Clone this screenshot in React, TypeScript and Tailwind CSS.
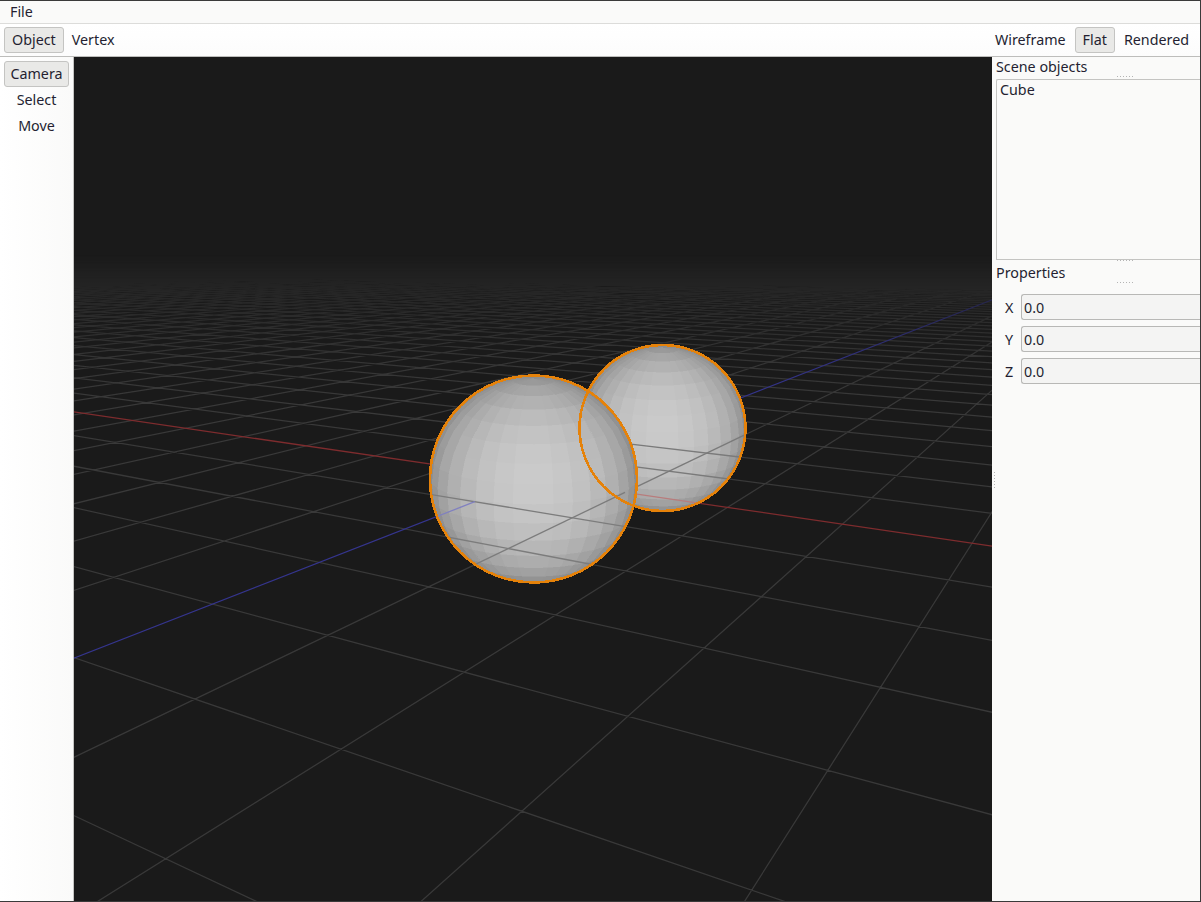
import React from "react";

// ground plane homography, fitted on the axes in the picture
const O = { x: 533, y: 479 };
const VX = { x: -1172, y: 230 };
const VZ = { x: 1171, y: 230 };
const G = -0.0512;
const H = -0.0836;

const ground = (u: number, v: number) => {
  const w = 1 + G * u + H * v;
  return {
    x: (O.x + u * G * VX.x + v * H * VZ.x) / w,
    y: (O.y + u * G * VX.y + v * H * VZ.y) / w,
  };
};

const N = 220;

const uLine = (u: number, vFrom = -N, vTo?: number) => {
  const max = (1 + G * u - 0.04) / -H;
  const a = ground(u, vFrom);
  const b = ground(u, Math.min(vTo ?? N, max));
  return `M${a.x.toFixed(2)} ${a.y.toFixed(2)}L${b.x.toFixed(2)} ${b.y.toFixed(2)}`;
};

const vLine = (v: number, uFrom = -N, uTo?: number) => {
  const max = (1 + H * v - 0.04) / -G;
  const a = ground(uFrom, v);
  const b = ground(Math.min(uTo ?? N, max), v);
  return `M${a.x.toFixed(2)} ${a.y.toFixed(2)}L${b.x.toFixed(2)} ${b.y.toFixed(2)}`;
};

const gridPath = () => {
  let d = "";
  for (let i = -N; i <= N; i++) {
    if (i !== 0) d += uLine(i) + vLine(i);
  }
  return d;
};

const EL = (14 * Math.PI) / 180;
const LONS = 32;
const LATS = 16;

const project = (lat: number, lon: number) => {
  const x = Math.cos(lat) * Math.sin(lon);
  const y = Math.sin(lat);
  const z = Math.cos(lat) * Math.cos(lon);
  return {
    x,
    y: y * Math.cos(EL) - z * Math.sin(EL),
    z: y * Math.sin(EL) + z * Math.cos(EL),
  };
};

const Sphere = ({ cx, cy, r }: { cx: number; cy: number; r: number }) => {
  const quads: { points: string; fill: string }[] = [];
  for (let i = 0; i < LATS; i++) {
    const lat0 = -Math.PI / 2 + (i * Math.PI) / LATS;
    const lat1 = lat0 + Math.PI / LATS;
    for (let j = 0; j < LONS; j++) {
      const lon0 = (j * 2 * Math.PI) / LONS;
      const lon1 = lon0 + (2 * Math.PI) / LONS;
      const mid = project((lat0 + lat1) / 2, (lon0 + lon1) / 2);
      if (mid.z <= -0.05) continue;
      const gray = Math.round(130 + 72 * Math.max(mid.z, 0));
      const points = [
        project(lat0, lon0),
        project(lat0, lon1),
        project(lat1, lon1),
        project(lat1, lon0),
      ]
        .map((p) => `${(cx + p.x * r).toFixed(2)},${(cy - p.y * r).toFixed(2)}`)
        .join(" ");
      quads.push({ points, fill: `rgb(${gray},${gray},${gray})` });
    }
  }
  return (
    <g shapeRendering="crispEdges">
      {quads.map((q, i) => (
        <polygon key={i} points={q.points} fill={q.fill} stroke={q.fill} strokeWidth={0.5} />
      ))}
    </g>
  );
};

const Viewport = () => (
  <svg viewBox="74 57 918 844" className="block h-full w-full">
    <defs>
      <linearGradient id="fade" gradientUnits="userSpaceOnUse" x1="0" y1="255" x2="0" y2="400">
        <stop offset="0" stopColor="#fff" stopOpacity="0" />
        <stop offset="0.25" stopColor="#fff" stopOpacity="0.38" />
        <stop offset="0.7" stopColor="#fff" stopOpacity="0.85" />
        <stop offset="1" stopColor="#fff" stopOpacity="1" />
      </linearGradient>
      <mask id="fadeMask" maskUnits="userSpaceOnUse" x="74" y="57" width="918" height="844">
        <rect x="74" y="57" width="918" height="844" fill="url(#fade)" />
      </mask>
      <clipPath id="s1">
        <circle cx="533.5" cy="479" r="103.5" />
      </clipPath>
      <clipPath id="s2">
        <circle cx="662.5" cy="428" r="83" />
      </clipPath>
    </defs>

    <g mask="url(#fadeMask)" fill="none">
      <path d={gridPath()} stroke="#393939" strokeWidth="1.25" />
      <path d={vLine(0)} stroke="#7e2c2e" strokeWidth="1.25" />
      <path d={uLine(0)} stroke="#35358e" strokeWidth="1.25" />
    </g>

    <Sphere cx={662.5} cy={428} r={83} />
    <g clipPath="url(#s2)" fill="none" strokeWidth="1.3">
      <path d={vLine(-2, 0, 6)} stroke="#7a7a7a" />
      <path d={vLine(-1, 0, 6)} stroke="#7a7a7a" />
      <path d={uLine(1, -6, 0)} stroke="#7a7a7a" />
      <path d={vLine(0, 0, 6)} stroke="#b87c7c" />
    </g>

    <Sphere cx={533.5} cy={479} r={103.5} />
    <g clipPath="url(#s1)" fill="none" strokeWidth="1.3">
      <path d={vLine(1, -6, 6)} stroke="#7c7c7c" />
      <path d={vLine(2, -6, 6)} stroke="#7c7c7c" />
      <path d={uLine(1, 0, 6)} stroke="#7c7c7c" />
      <path d={uLine(0, 1, 6)} stroke="#8080c0" />
    </g>

    <g fill="none" stroke="#e5820a" strokeWidth="2.6" shapeRendering="crispEdges">
      <circle cx="662.5" cy="428" r="83" />
      <circle cx="533.5" cy="479" r="103.5" />
    </g>
  </svg>
);

const ToolButton = ({ label, active }: { label: string; active?: boolean }) => (
  <div
    className={
      active
        ? "flex h-[26px] items-center justify-center rounded-[3px] border border-[#c4c4c2] bg-[#e9e9e7] px-[7px]"
        : "flex h-[26px] items-center justify-center border border-transparent px-[7px]"
    }
  >
    {label}
  </div>
);

const Gripper = ({ className }: { className: string }) => (
  <div
    className={`absolute h-px w-[16px] bg-[repeating-linear-gradient(90deg,#b4b4b4_0px,#b4b4b4_1px,transparent_1px,transparent_3px)] ${className}`}
  />
);

const Field = ({ label }: { label: string }) => (
  <div className="flex h-[26px] items-center">
    <div className="w-[25px] pl-[9px] pt-[2px]">{label}</div>
    <div className="flex h-[26px] flex-1 items-center rounded-l-[3px] border border-r-0 border-[#b8b8b6] bg-[#f4f4f3] pl-[2px] pt-[1px]">
      0.0
    </div>
  </div>
);

export default function App() {
  return (
    <div className="flex h-[902px] w-[1201px] flex-col overflow-hidden border-t border-r border-b border-[#3a3a3a] bg-[#fafaf9] font-['Noto_Sans',sans-serif] text-[14.3px] text-[#241f31]">
      <div className="flex h-[23px] shrink-0 items-center border-b border-[#dcdcda] bg-[#fafaf9] pl-[10px]">
        File
      </div>

      <div className="flex h-[33px] shrink-0 items-center justify-between border-b border-[#bdbdbb] bg-gradient-to-b from-[#ffffff] to-[#fcfcfc] pl-[4px] pr-[3px]">
        <div className="flex">
          <ToolButton label="Object" active />
          <ToolButton label="Vertex" />
        </div>
        <div className="flex gap-px">
          <ToolButton label="Wireframe" />
          <ToolButton label="Flat" active />
          <ToolButton label="Rendered" />
        </div>
      </div>

      <div className="flex min-h-0 flex-1">
        <div className="w-[74px] shrink-0 border-r border-[#c4c4c2] bg-gradient-to-r from-[#ffffff] to-[#fafaf9] px-[4px] pt-[4px]">
          <ToolButton label="Camera" active />
          <ToolButton label="Select" />
          <ToolButton label="Move" />
        </div>

        <div className="min-w-0 flex-1 bg-[#1a1a1a]">
          <Viewport />
        </div>

        <div className="relative w-[208px] shrink-0 pl-[4px]">
          <div className="absolute left-[2px] top-[415px] h-[16px] w-px bg-[repeating-linear-gradient(180deg,#b4b4b4_0px,#b4b4b4_1px,transparent_1px,transparent_3px)]" />
          <div className="flex h-[22px] items-center pb-[2px]">Scene objects</div>
          <div className="h-[181px] rounded-tl-[2px] border-t border-b border-l border-[#c4c4c2] pl-[3px] leading-[20px]">
            Cube
          </div>
          <div className="mt-[2px] flex h-[22px] items-center">Properties</div>
          <div className="mt-[10px] flex flex-col gap-[6px]">
            <Field label="X" />
            <Field label="Y" />
            <Field label="Z" />
          </div>
          <Gripper className="left-[125px] top-[19px]" />
          <Gripper className="left-[125px] top-[203px]" />
          <Gripper className="left-[125px] top-[225px]" />
        </div>
      </div>
    </div>
  );
}
